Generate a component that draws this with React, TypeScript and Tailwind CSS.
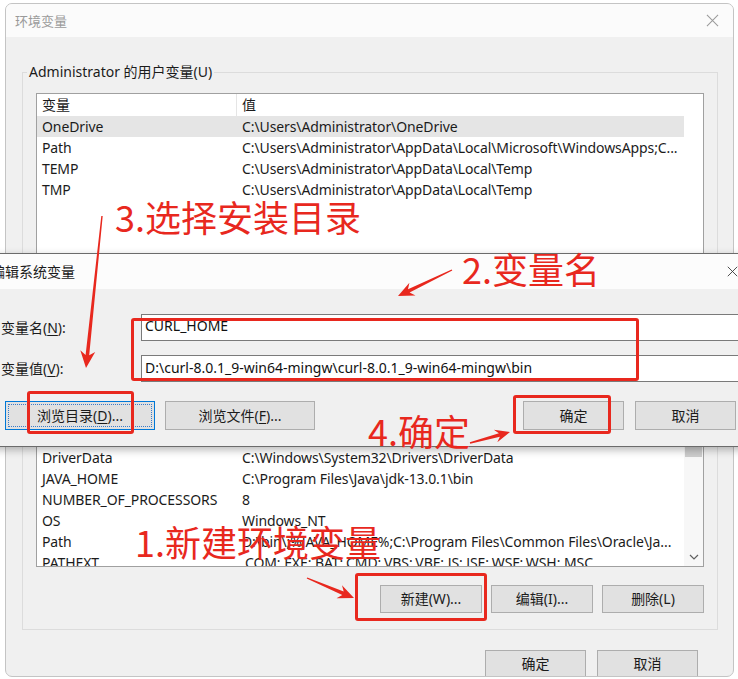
import React from "react";

type Pt = [number, number];

function arrow(tail: Pt, tip: Pt, headLen = 17, headHalf = 7.5, w0 = 0.7, w1 = 1.8): string {
  const dx = tip[0] - tail[0];
  const dy = tip[1] - tail[1];
  const L = Math.hypot(dx, dy);
  const ux = dx / L;
  const uy = dy / L;
  const nx = -uy;
  const ny = ux;
  const bx = tip[0] - ux * headLen;
  const by = tip[1] - uy * headLen;
  const neckX = bx + ux * 4;
  const neckY = by + uy * 4;
  const pts: Pt[] = [
    [tail[0] + nx * w0, tail[1] + ny * w0],
    [neckX + nx * w1, neckY + ny * w1],
    [bx + nx * headHalf, by + ny * headHalf],
    [tip[0], tip[1]],
    [bx - nx * headHalf, by - ny * headHalf],
    [neckX - nx * w1, neckY - ny * w1],
    [tail[0] - nx * w0, tail[1] - ny * w0],
  ];
  return pts.map((p) => `${p[0].toFixed(1)},${p[1].toFixed(1)}`).join(" ");
}

const userRows: [string, string][] = [
  ["OneDrive", "C:\\Users\\Administrator\\OneDrive"],
  ["Path", "C:\\Users\\Administrator\\AppData\\Local\\Microsoft\\WindowsApps;C..."],
  ["TEMP", "C:\\Users\\Administrator\\AppData\\Local\\Temp"],
  ["TMP", "C:\\Users\\Administrator\\AppData\\Local\\Temp"],
];

const sysRows: [string, string][] = [
  ["ACSetupSvcPort", "23210"],
  ["ACSvcPort", "17532"],
  ["ComSpec", "C:\\Windows\\system32\\cmd.exe"],
  ["DriverData", "C:\\Windows\\System32\\Drivers\\DriverData"],
  ["JAVA_HOME", "C:\\Program Files\\Java\\jdk-13.0.1\\bin"],
  ["NUMBER_OF_PROCESSORS", "8"],
  ["OS", "Windows_NT"],
  ["Path", "D:\\bin\\;%JAVA_HOME%;C:\\Program Files\\Common Files\\Oracle\\Ja..."],
  ["PATHEXT", ".COM;.EXE;.BAT;.CMD;.VBS;.VBE;.JS;.JSE;.WSF;.WSH;.MSC"],
];

function Row({ name, value, selected }: { name: string; value: string; selected?: boolean }) {
  return (
    <div
      className={
        selected
          ? "flex h-[21px] leading-[21px] tracking-[-0.1px] bg-[#e5e5e5]"
          : "flex h-[21px] leading-[21px] tracking-[-0.1px]"
      }
    >
      <div className="w-[200px] shrink-0 pl-[5px] whitespace-nowrap">{name}</div>
      <div className="flex-1 min-w-0 pl-[5px] whitespace-nowrap overflow-hidden">{value}</div>
    </div>
  );
}

function Header() {
  return (
    <div className="flex h-[22px] leading-[22px] bg-white shrink-0">
      <div className="w-[200px] shrink-0 h-full pl-[5px] border-r border-[#e5e5e5]">变量</div>
      <div className="flex-1 pl-[5px]">值</div>
    </div>
  );
}

function Btn({ children, className = "" }: { children: React.ReactNode; className?: string }) {
  return (
    <div
      className={
        "flex items-center justify-center border border-[#adadad] bg-[#e1e1e1] text-[14px] text-[#1b1b1b] whitespace-nowrap " +
        className
      }
    >
      {children}
    </div>
  );
}

function XIcon({ size, color }: { size: number; color: string }) {
  return (
    <svg width={size} height={size} viewBox="0 0 14 14" fill="none">
      <path d="M1 1 L13 13 M13 1 L1 13" stroke={color} strokeWidth="1.1" />
    </svg>
  );
}

export default function App() {
  const red = "#e8281e";
  return (
    <div className="relative w-[738px] h-[679px] overflow-hidden bg-white font-['Noto_Sans','Noto_Sans_CJK_SC',sans-serif] text-[14px] leading-[18px] text-[#1b1b1b]">
      {/* Main dialog */}
      <div className="ml-[5px] mt-[3px] w-[729px] h-[674px] border border-[#c4c4c4] rounded-[7px] bg-[#f0f0f0] overflow-hidden flex flex-col">
        <div className="h-[33px] shrink-0 bg-[#fbfbfb] flex items-center pl-[9px] pr-[14px]">
          <span className="text-[13px] text-[#9a9a9a] font-['Noto_Sans_CJK_SC',sans-serif]">环境变量</span>
          <span className="ml-auto">
            <XIcon size={13} color="#9a9a9a" />
          </span>
        </div>

        {/* User variables */}
        <fieldset className="mt-[26px] ml-[16px] mr-[15px] border border-[#dcdcdc] px-[13px] pt-[12px] pb-[10px] min-w-0">
          <legend className="-ml-[9px] px-[2px] h-[18px] leading-[18px]">Administrator 的用户变量(U)</legend>
          <div className="h-[190px] border border-[#a0a0a0] bg-white flex flex-col overflow-hidden">
            <div className="mr-[19px] flex flex-col">
              <Header />
              {userRows.map((r, i) => (
                <Row key={r[0]} name={r[0]} value={r[1]} selected={i === 0} />
              ))}
            </div>
          </div>
          <div className="flex justify-end gap-[9px] mt-[10px]">
            <Btn className="w-[102px] h-[28px]">新建(N)...</Btn>
            <Btn className="w-[102px] h-[28px]">编辑(E)...</Btn>
            <Btn className="w-[102px] h-[28px]">删除(D)</Btn>
          </div>
        </fieldset>

        {/* System variables */}
        <fieldset className="mt-[10px] ml-[16px] mr-[15px] border border-[#dcdcdc] px-[13px] pt-[3px] pb-[16px] min-w-0">
          <legend className="-ml-[9px] px-[2px] h-[18px] leading-[18px]">系统变量(S)</legend>
          <div className="h-[204px] border border-[#a0a0a0] bg-white flex overflow-hidden">
            <div className="flex-1 min-w-0 flex flex-col overflow-hidden">
              <Header />
              <div className="-mt-[2px] flex flex-col">
                {sysRows.map((r) => (
                  <Row key={r[0] + r[1]} name={r[0]} value={r[1]} />
                ))}
              </div>
            </div>
            <div className="w-[19px] shrink-0 bg-[#f7f7f7] flex flex-col items-center">
              <div className="h-[17px] shrink-0" />
              <div className="w-[17px] h-[76px] bg-[#cdcdcd]" />
              <div className="mt-auto h-[19px] flex items-center justify-center">
                <svg width="10" height="6" viewBox="0 0 10 6" fill="none">
                  <path d="M1 1 L5 5 L9 1" stroke="#606060" strokeWidth="1.2" />
                </svg>
              </div>
            </div>
          </div>
          <div className="flex justify-end gap-[9px] mt-[18px]">
            <Btn className="w-[102px] h-[28px]">新建(W)...</Btn>
            <Btn className="w-[102px] h-[28px]">编辑(I)...</Btn>
            <Btn className="w-[102px] h-[28px]">删除(L)</Btn>
          </div>
        </fieldset>

        <div className="mt-[20px] flex justify-end gap-[11px] pr-[35px]">
          <Btn className="w-[101px] h-[28px]">确定</Btn>
          <Btn className="w-[101px] h-[28px]">取消</Btn>
        </div>
      </div>

      {/* Edit system variable dialog */}
      <div className="absolute left-[-21px] top-[253px] w-[780px] h-[194px] border border-[#6b6b6b] bg-[#f0f0f0] shadow-[0_3px_8px_rgba(0,0,0,0.28)] flex flex-col">
        <div className="h-[35px] shrink-0 bg-[#fcfcfc] flex items-center pl-[11px] pr-[20px]">
          <span className="text-[14px]">编辑系统变量</span>
          <span className="ml-auto">
            <XIcon size={11} color="#333" />
          </span>
        </div>
        <div className="flex flex-col pl-[21px] pr-[13px] pt-[25px] pb-[16px]">
          <div className="flex items-center">
            <div className="w-[140px] shrink-0 whitespace-nowrap">
              变量名(<span className="underline underline-offset-2">N</span>):
            </div>
            <div className="flex-1 h-[27px] border border-[#7a7a7a] bg-white pl-[3px] pt-[2px] text-[#111] whitespace-nowrap">
              CURL_HOME
            </div>
          </div>
          <div className="flex items-center mt-[14px]">
            <div className="w-[140px] shrink-0 whitespace-nowrap">
              变量值(<span className="underline underline-offset-2">V</span>):
            </div>
            <div className="flex-1 h-[27px] border border-[#7a7a7a] bg-white pl-[3px] pt-[3px] text-[#111] whitespace-nowrap">
              D:\curl-8.0.1_9-win64-mingw\curl-8.0.1_9-win64-mingw\bin
            </div>
          </div>
          <div className="flex mt-[19px] ml-[4px] mr-[9px]">
            <div className="w-[150px] h-[29px] border border-[#0078d7] bg-[#e1e1e1] p-[2px]">
              <div className="w-full h-full border border-dotted border-[#3a7bc8] flex items-center justify-center whitespace-nowrap">
                浏览目录(<span className="underline underline-offset-2">D</span>)...
              </div>
            </div>
            <Btn className="w-[150px] h-[29px] ml-[10px]">
              浏览文件(<span className="underline underline-offset-2">F</span>)...
            </Btn>
            <Btn className="w-[101px] h-[29px] ml-auto">确定</Btn>
            <Btn className="w-[101px] h-[29px] ml-[11px]">取消</Btn>
          </div>
        </div>
      </div>

      {/* Red highlight boxes */}
      <div className="absolute left-[131px] top-[318px] w-[508px] h-[63px] border-[3px] border-[#e8281e] rounded-[3px]" />
      <div className="absolute left-[27px] top-[391px] w-[107px] h-[43px] border-[3px] border-[#e8281e] rounded-[3px]" />
      <div className="absolute left-[513px] top-[395px] w-[98px] h-[39px] border-[3px] border-[#e8281e] rounded-[3px]" />
      <div className="absolute left-[355px] top-[573px] w-[132px] h-[48px] border-[3px] border-[#e8281e] rounded-[3px]" />

      {/* Arrows */}
      <svg className="absolute inset-0 pointer-events-none" width="738" height="679" viewBox="0 0 738 679">
        <polygon points={arrow([102, 216], [86, 368])} fill={red} />
        <polygon points={arrow([452, 270], [398, 296], 16, 7)} fill={red} />
        <polygon points={arrow([470, 443], [510, 432], 15, 6.5)} fill={red} />
        <polygon points={arrow([307, 578], [354, 598], 16, 7)} fill={red} />
      </svg>

      {/* Red annotation texts */}
      <div className="absolute left-[115px] top-[198px] text-[36px] leading-none text-[#e8281e] font-['Noto_Sans_CJK_SC',sans-serif] whitespace-nowrap">
        3.选择安装目录
      </div>
      <div className="absolute left-[462px] top-[250px] text-[36px] leading-none text-[#e8281e] font-['Noto_Sans_CJK_SC',sans-serif] whitespace-nowrap">
        2.变量名
      </div>
      <div className="absolute left-[368px] top-[412px] text-[36px] leading-none text-[#e8281e] font-['Noto_Sans_CJK_SC',sans-serif] whitespace-nowrap">
        4.确定
      </div>
      <div className="absolute left-[135px] top-[523px] text-[36px] leading-none text-[#e8281e] font-['Noto_Sans_CJK_SC',sans-serif] whitespace-nowrap">
        1.新建环境变量
      </div>
    </div>
  );
}
